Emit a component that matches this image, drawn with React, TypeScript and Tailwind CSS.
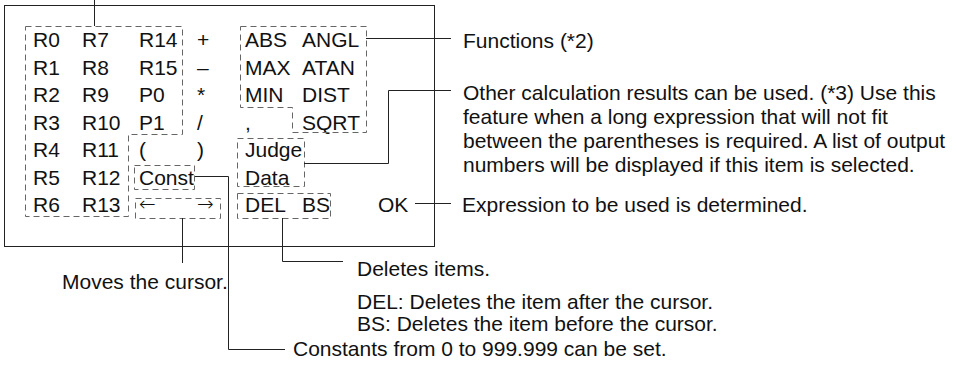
import React from "react";

const rows: string[][] = [
  ["R0", "R7", "R14", "+", "ABS", "ANGL", ""],
  ["R1", "R8", "R15", "–", "MAX", "ATAN", ""],
  ["R2", "R9", "P0", "*", "MIN", "DIST", ""],
  ["R3", "R10", "P1", "/", ",", "SQRT", ""],
  ["R4", "R11", "(", ")", "Judge", "", ""],
  ["R5", "R12", "Const", "", "Data", "", ""],
  ["R6", "R13", "←", "→", "DEL", "BS", "OK"],
];

const arrows = new Set(["←", "→"]);

export default function App() {
  return (
    <div className="relative flex items-start w-[957px] h-[367px] bg-white text-[#111] overflow-hidden font-['Liberation_Sans',Arial,sans-serif]">
      {/* Screen */}
      <div className="shrink-0 ml-[4px] mt-[5px] w-[431px] h-[242px] border border-[#222] pl-[28px] pt-[20px]">
        <div className="grid grid-cols-[49px_57px_58px_48px_57px_76px_auto] auto-rows-[27.5px] text-[21px] leading-[27.5px]">
          {rows.flat().map((cell, i) => (
            <span
              key={i}
              className={
                arrows.has(cell)
                  ? "whitespace-nowrap font-['DejaVu_Sans',sans-serif] font-extralight text-[20px]"
                  : "whitespace-nowrap"
              }
            >
              {cell}
            </span>
          ))}
        </div>
      </div>

      {/* Right-hand notes */}
      <div className="flex flex-col ml-[28px] pt-[29px] text-[21px] leading-[24px] whitespace-nowrap">
        <p>Functions (*2)</p>
        <p className="mt-[28px]">
          Other calculation results can be used. (*3) Use this
          <br />
          feature when a long expression that will not fit
          <br />
          between the parentheses is required. A list of output
          <br />
          numbers will be displayed if this item is selected.
        </p>
        <p className="mt-[16px] -ml-px">Expression to be used is determined.</p>
      </div>

      {/* Dashed groups and leader lines */}
      <svg className="absolute inset-0" width="957" height="367" fill="none">
        <g stroke="#666" strokeWidth="1" strokeDasharray="6 4">
          <path d="M25.5 26.5H182.5V134.5H128.5V216.5H25.5Z" />
          <rect x="134.5" y="165.5" width="60" height="24" />
          <rect x="135.5" y="198.5" width="85" height="20" />
          <path d="M240.5 26.5H366.5V132.5H292.5V107.5H240.5Z" />
          <rect x="237.5" y="138.5" width="67" height="48" />
          <rect x="237.5" y="193.5" width="93" height="25" />
        </g>
        <g stroke="#222" strokeWidth="1">
          <path d="M94.5 0V26" />
          <path d="M366 38.5H451" />
          <path d="M304 163.5H388.5V90.5H451" />
          <path d="M415 203.5H451" />
          <path d="M195 176.5H228.5V349.5H285" />
          <path d="M182.5 218V263" />
          <path d="M282.5 218V261.5H343" />
        </g>
      </svg>

      {/* Notes under the screen */}
      <p className="absolute left-[62px] top-[270px] text-[21px] leading-[24px] whitespace-nowrap">
        Moves the cursor.
      </p>
      <div className="absolute left-[357px] top-[257px] flex flex-col gap-[10px] text-[21px] whitespace-nowrap">
        <p className="leading-[24px]">Deletes items.</p>
        <div className="flex flex-col leading-[22px]">
          <span>DEL: Deletes the item after the cursor.</span>
          <span>BS: Deletes the item before the cursor.</span>
        </div>
      </div>
      <p className="absolute left-[293px] top-[337px] text-[21px] leading-[24px] whitespace-nowrap">
        Constants from 0 to 999.999 can be set.
      </p>
    </div>
  );
}
